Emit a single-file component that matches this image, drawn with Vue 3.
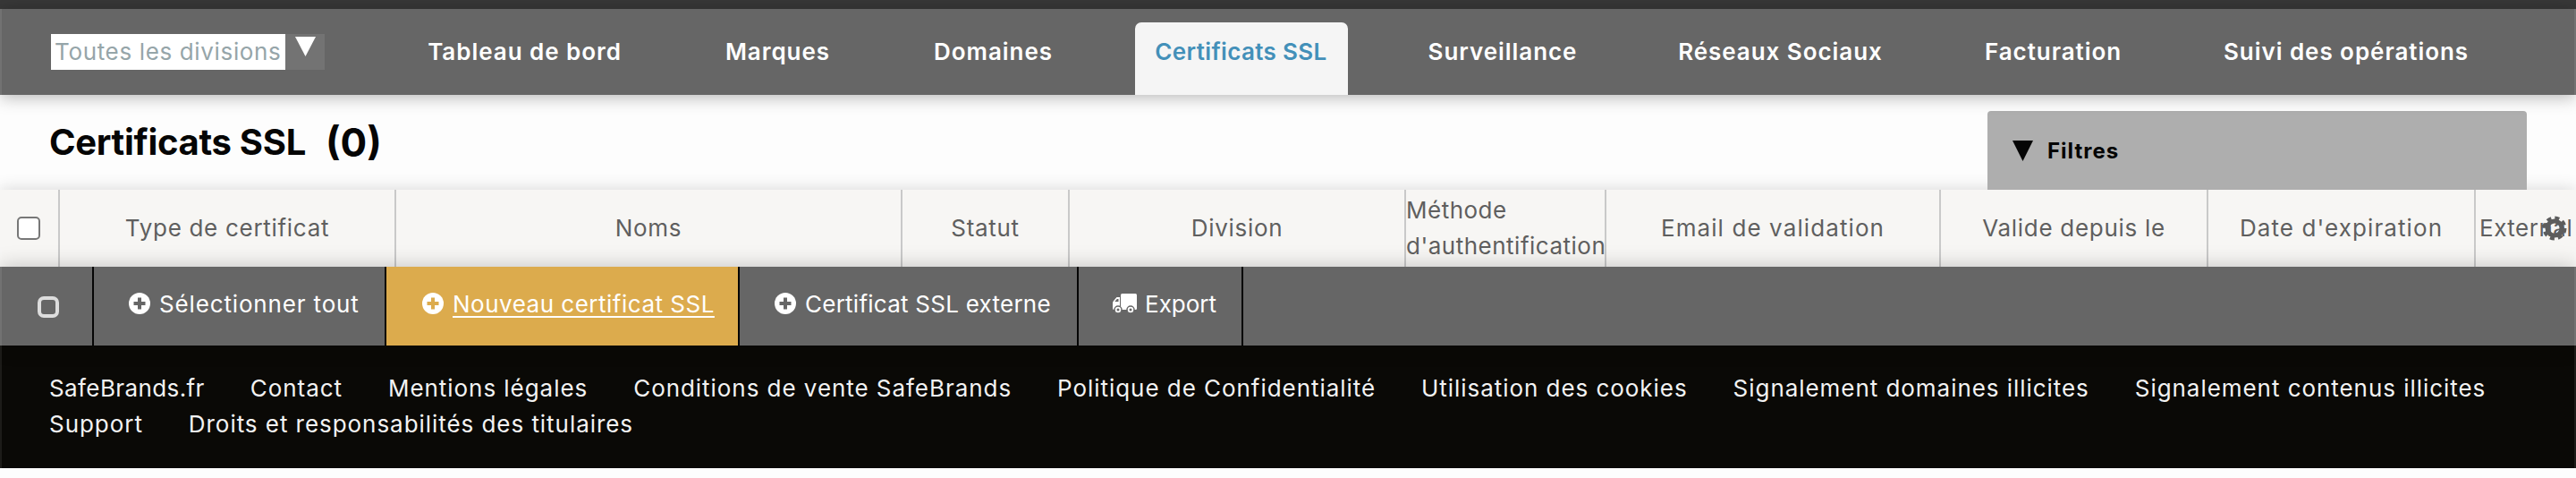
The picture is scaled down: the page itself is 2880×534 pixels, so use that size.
<script setup>
const navItems = ['Tableau de bord','Marques','Domaines','Certificats SSL','Surveillance','Réseaux Sociaux','Facturation','Suivi des opérations']
const columns = ['Type de certificat','Noms','Statut','Division',"Méthode d'authentification",'Email de validation','Valide depuis le',"Date d'expiration",'External']
const footerLinks = ['SafeBrands.fr','Contact','Mentions légales','Conditions de vente SafeBrands','Politique de Confidentialité','Utilisation des cookies','Signalement domaines illicites','Signalement contenus illicites','Support','Droits et responsabilités des titulaires']
const actions = [
  { label: 'Sélectionner tout', cls: 'select-all' },
  { label: 'Nouveau certificat SSL', cls: 'new-cert' },
  { label: 'Certificat SSL externe', cls: 'ext-cert' }
]
</script>

<template>
  <div class="page">
    <div class="topline"></div>
    <nav class="nav">
      <div class="division">
        <span class="division-value">Toutes les divisions</span>
        <span class="division-arrow"><svg width="23" height="22" viewBox="0 0 23 22"><path d="M0 0H23L11.5 22Z" fill="#fff"/></svg></span>
      </div>
      <div class="nav-items">
        <a v-for="(item, i) in navItems" :key="item" class="nav-item" :class="{ active: i === 3 }">{{ item }}</a>
      </div>
    </nav>
    <header class="heading">
      <h1 class="title">Certificats SSL<span class="count">(0)</span></h1>
      <div class="filters">
        <svg width="23" height="23" viewBox="0 0 23 23"><path d="M0 0H23L11.5 23Z" fill="#050505"/></svg>
        <span>Filtres</span>
      </div>
    </header>
    <div class="thead">
      <div class="th th-check"><span class="checkbox"></span></div>
      <div v-for="(col, i) in columns" :key="col" class="th" :class="{ 'th-left': i === 4 || i === 8 }">
        <span class="th-label">{{ col }}</span>
      </div>
      <svg class="gear" width="28" height="28" viewBox="0 0 28 28">
        <circle cx="14" cy="14" r="8" fill="none" stroke="#5d5d5d" stroke-width="5"/>
        <circle cx="14" cy="14" r="11.5" fill="none" stroke="#5d5d5d" stroke-width="4" stroke-dasharray="5 4.03"/>
      </svg>
    </div>
    <div class="actions">
      <div class="action action-check"><span class="bar-check"></span></div>
      <div v-for="a in actions" :key="a.label" class="action" :class="a.cls">
        <svg class="plus" width="24" height="24" viewBox="0 0 24 24">
          <circle cx="12" cy="12" r="12" fill="#fff"/>
          <path d="M10 5.500h4V10h4.500v4H14v4.500h-4V14H5.500v-4H10z" :fill="a.cls === 'new-cert' ? '#dcab4d' : '#666'"/>
        </svg>
        <span class="action-label">{{ a.label }}</span>
      </div>
      <div class="action export">
        <svg class="truck" width="27" height="23" viewBox="0 0 27 23">
          <path d="M9 1.500A1.500 1.500 0 0 1 10.500 0H25.500A1.500 1.500 0 0 1 27 1.500V16.500A1.500 1.500 0 0 1 25.500 18H9Z" fill="#fff"/>
          <path d="M8 4H4.500L0.700 8.500Q0 9.300 0 10.500V16.500Q0 18 1.500 18H8Z" fill="#fff"/>
          <path d="M6.500 6H4.800L2.300 9H6.500Z" fill="#666"/>
          <circle cx="6" cy="18" r="4" fill="#fff" stroke="#666" stroke-width="1.500"/>
          <circle cx="20" cy="18" r="4" fill="#fff" stroke="#666" stroke-width="1.500"/>
          <circle cx="6" cy="18" r="1.500" fill="#666"/>
          <circle cx="20" cy="18" r="1.500" fill="#666"/>
        </svg>
        <span class="action-label">Export</span>
      </div>
    </div>
    <footer class="footer">
      <a v-for="link in footerLinks" :key="link" class="footer-link">{{ link }}</a>
    </footer>
  </div>
</template>

<style scoped>
.page {
  width: 2880px;
  height: 534px;
  overflow: hidden;
  background: #fdfdfd;
  font-family: Inter, "Noto Sans", sans-serif;
  display: flex;
  flex-direction: column;
  position: relative;
}
.page::after {
  content: "";
  position: absolute;
  inset: 10px 0 11px;
  border-left: 2px solid rgba(255,255,255,.08);
  border-right: 2px solid rgba(255,255,255,.08);
  z-index: 3;
  pointer-events: none;
}
.topline { height: 10px; background: #383838; }
.nav {
  height: 96px;
  background: #666;
  box-shadow: 0 2px 18px rgba(0,0,0,.3);
  display: flex;
  padding-left: 57px;
  position: relative;
  z-index: 2;
}
.division { display: flex; height: 40px; margin-top: 28px; }
.division-value {
  width: 262px;
  background: #fff;
  color: #96a5a9;
  font-size: 26px;
  line-height: 40px;
  padding-left: 4px;
  box-sizing: border-box;
  white-space: nowrap;
  letter-spacing: .65px;
}
.division-arrow {
  width: 44px;
  background: #737373;
  display: flex;
  justify-content: center;
  padding-top: 3px;
  box-sizing: border-box;
}
.nav-items {
  margin-left: 90px;
  display: grid;
  grid-template-columns: 267px 166px 183px 238px 214px 274px 203px 319px;
  column-gap: 66.5px;
}
.nav-item {
  margin-top: 15px;
  border-radius: 7px 7px 0 0;
  color: #fff;
  font-weight: 600;
  font-size: 26px;
  letter-spacing: .95px;
  line-height: 40px;
  padding-top: 13px;
  text-align: center;
  white-space: nowrap;
}
.nav-item.active { background: #f5f5f5; color: #4390b9; letter-spacing: .35px; }
.heading {
  height: 106px;
  display: flex;
  justify-content: space-between;
  padding: 0 55px;
  position: relative;
}
.title {
  margin: 0;
  font-size: 40px;
  font-weight: 700;
  line-height: 106px;
  color: #050505;
  letter-spacing: -.3px;
  display: flex;
  align-items: center;
}
.count { margin-left: 22px; font-size: 44px; letter-spacing: 0; }
.filters {
  align-self: flex-end;
  width: 603px;
  height: 88px;
  background: #aeaeae;
  border-radius: 4px 4px 0 0;
  display: flex;
  align-items: center;
  gap: 16px;
  padding: 0 0 0 28px;
  box-sizing: border-box;
  font-size: 24px;
  font-weight: 700;
  letter-spacing: 1px;
  color: #050505;
  position: relative;
  z-index: 1;
}
.thead {
  height: 86px;
  background: #f7f6f4;
  display: grid;
  grid-template-columns: 65px 376px 566px 187px 376px 224px 374px 299px 299px 114px;
  box-shadow: 0 0 18px rgba(0,0,0,.16);
  position: relative;
}
.th {
  border-left: 2px solid #c9c9c9;
  color: #5f5f5f;
  font-size: 26px;
  letter-spacing: .7px;
  line-height: 40px;
  display: flex;
  align-items: center;
  justify-content: center;
  text-align: center;
  overflow: hidden;
  box-sizing: border-box;
  min-width: 0;
}
.th:nth-child(7), .th:nth-child(9) { letter-spacing: 1.1px; }
.th-check { border-left: 0; }
.th-left { justify-content: flex-start; text-align: left; letter-spacing: .5px; }
.checkbox {
  width: 26px;
  height: 26px;
  background: #fff;
  border: 2.500px solid #777;
  border-radius: 5px;
  box-sizing: border-box;
  margin-left: -1px;
}
.gear { position: absolute; right: 10px; top: 29px; }
.th:last-of-type .th-label { padding-left: 4px; }
.actions {
  height: 88px;
  background: #666;
  display: flex;
  box-shadow: 0 0 22px rgba(0,0,0,.22);
  position: relative;
  color: #fff;
  font-size: 26px;
  letter-spacing: .85px;
}
.action {
  display: flex;
  align-items: center;
  gap: 10px;
  padding: 0 0 6px 39px;
  box-sizing: border-box;
  border-right: 2px solid #050505;
  white-space: nowrap;
}
.action-check { width: 105px; padding: 0; justify-content: center; }
.bar-check {
  width: 24px;
  height: 24px;
  border: 4px solid #ddd;
  border-radius: 7px;
  box-sizing: border-box;
  filter: blur(.7px);
  margin: 2px 0 0 5px;
}
.select-all { width: 327px; }
.new-cert { width: 395px; background: #dcab4d; padding-left: 40px; letter-spacing: .5px; }
.new-cert .action-label { text-decoration: underline; text-underline-offset: 4px; }
.ext-cert { width: 379px; letter-spacing: .25px; }
.export { width: 184px; gap: 9px; padding-left: 38px; letter-spacing: 0; }
.footer {
  height: 137px;
  background: #0a0906;
  color: #f3f3f3;
  font-size: 26px;
  letter-spacing: .95px;
  line-height: 40px;
  padding: 28px 80px 0 55px;
  box-sizing: border-box;
  display: flex;
  flex-wrap: wrap;
  align-content: flex-start;
  column-gap: 51px;
}
.footer-link:first-child { letter-spacing: .4px; }
</style>

<style>
body { background: #fdfdfd; }
</style>
